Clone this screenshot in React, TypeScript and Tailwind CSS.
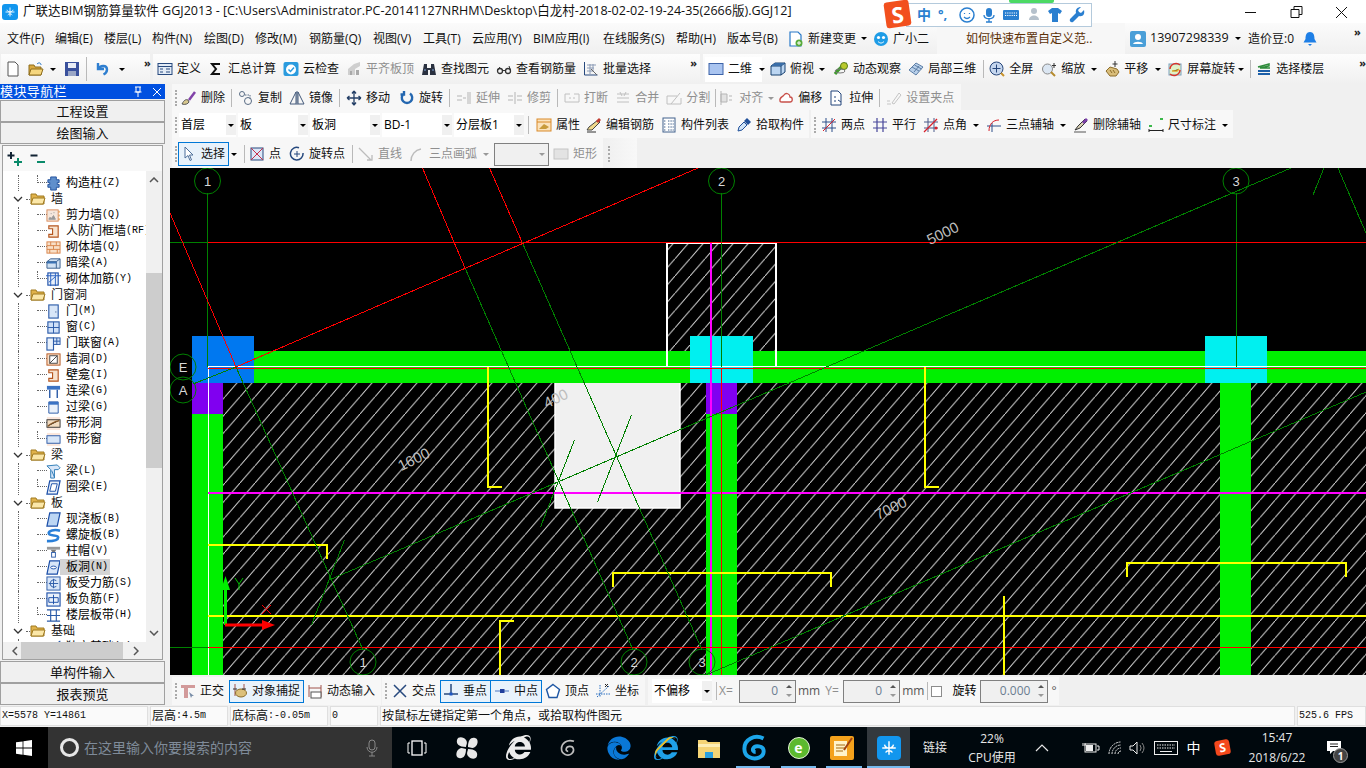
import type { ReactNode } from "react";
import { FaEdge, FaInternetExplorer } from "react-icons/fa";

// 16x16 toolbar + tree icons
const icons: Record<string, ReactNode> = {
  newDoc: <path d="M3 1h7l3 3v11H3z" fill="#fff" stroke="#555" />,
  open: <><path d="M1 4h5l1 2h6v8H1z" fill="#d9a93f" stroke="#8d6c1c" /><path d="M3 8h12l-2 6H1z" fill="#f5d67e" stroke="#8d6c1c" /><path d="M9 3c2-2 4-1 4 1" fill="none" stroke="#1c6fc4" /></>,
  save: <><rect x="1" y="1" width="14" height="14" fill="#39509c" /><rect x="4" y="2" width="8" height="5" fill="#e8ecf6" /><rect x="4" y="10" width="8" height="5" fill="#9aa6c6" /></>,
  undo: <path d="M3 2v6h6M3.5 8C5 4 12 4 12 8.500c0 2-1.500 4-3.500 5" fill="none" stroke="#2f7fd0" strokeWidth="2.400" />,
  define: <><rect x="1" y="2.500" width="14" height="11" fill="#e2ebf6" stroke="#27497e" /><path d="M1 5.500h14M3 8h3M3 11h3M9 8h4M9 11h4" stroke="#27497e" /></>,
  sigma: <path d="M12 3H4l4 5-4 5h8" fill="none" stroke="#111" strokeWidth="2" />,
  cloudCheck: <><rect x="0.500" y="1" width="15" height="14" rx="2" fill="#2b9bde" /><circle cx="8" cy="8.500" r="5" fill="#fff" /><path d="M5.500 8.500l2 2 3.500-4" fill="none" stroke="#2b9bde" strokeWidth="1.500" /></>,
  alignOff: <><path d="M2 8l6-5 6-2v4l-5 3v6H2z" fill="#cfcfcf" /><path d="M4 10h2v4H4zM10 9h3v5h-3z" fill="#a9a9a9" /></>,
  binoc: <><path d="M3 3h3v4h4V3h3l2 11H9V9H7v5H1z" fill="#2a3140" /><path d="M3 9h2M11 9h2" stroke="#7fa4d8" /></>,
  glasses: <><circle cx="4" cy="10" r="2.500" fill="none" stroke="#333" strokeWidth="1.300" /><circle cx="12" cy="10" r="2.500" fill="none" stroke="#333" strokeWidth="1.300" /><path d="M6.500 9.500h3M1.500 9L4 6M14.500 9L13 5" stroke="#333" /></>,
  batch: <><path d="M1.500 1v13h13" fill="none" stroke="#27497e" /><path d="M4 4h9M4 7h7M4 10h5M7 3v10M10 3v8" stroke="#8a9ab5" /><path d="M8 8l6 6" stroke="#666" /></>,
  view2d: <rect x="1" y="2.500" width="14" height="11" fill="#a9c4f0" stroke="#3d63a8" />,
  topView: <><path d="M1 5l4-3h10v9l-4 3H1z" fill="#bcd6f2" stroke="#17406f" /><path d="M1 5h10v9M11 5l4-3" fill="none" stroke="#17406f" /><path d="M1 5l4-3h10l-4 3z" fill="#3a6ea8" /></>,
  orbit: <><path d="M2 13C5 9 10 4 14 3" stroke="#3f9a2c" strokeWidth="3" /><circle cx="11" cy="5" r="3.500" fill="#b9c92c" stroke="#5a7e1a" /><ellipse cx="7" cy="10" rx="5" ry="2" fill="none" stroke="#777" /></>,
  part3d: <><path d="M1 9l7-7 7 4-7 8z" fill="#b9d0ea" stroke="#5c7ea6" /><path d="M4 6l7 4M6.500 4l7 4M6 11l5-6" stroke="#5c7ea6" /></>,
  fullScreen: <><circle cx="7.500" cy="7.500" r="6.500" fill="#c5d6ee" stroke="#26467a" /><path d="M7.500 3.500v8M3.500 7.500h8" stroke="#26467a" /><path d="M12 12l3 3" stroke="#c8922a" strokeWidth="2" /></>,
  zoomIcon: <><circle cx="6.500" cy="8" r="5" fill="#dbe6f2" stroke="#8a8a8a" /><path d="M10 11l4 4" stroke="#b58a2c" strokeWidth="2" /><path d="M13 2v5M11 4.500h4" stroke="#333" /></>,
  hand: <><path d="M2 10l4-4 7 2 2 3-3 4H6z" fill="#d9bd79" stroke="#8c6d2b" /><path d="M6 9l2 3M9 9l2 3" stroke="#8c6d2b" /><path d="M11 0v6M8.500 3h5" stroke="#333" /></>,
  screenRot: <><rect x="2" y="3" width="12" height="11" fill="#dff1c8" stroke="#7aa0c0" /><path d="M3 8a6 6 0 0 1 10-4M13 9a6 6 0 0 1-10 4" fill="none" stroke="#d9342b" strokeWidth="1.500" /><path d="M5 10h5l2-2" stroke="#e3a92c" strokeWidth="1.500" /></>,
  floors: <><path d="M2 6l11-3v2L4 7h10" fill="none" stroke="#2d8b3a" strokeWidth="1.500" /><path d="M2 10h12M2 13h12" stroke="#1c5fa8" strokeWidth="2" /></>,
  broom: <><path d="M1 14c2-4 4-5 6-4l1 2c-1 2-4 3-7 2z" fill="#d8c88d" stroke="#555" /><path d="M8 10l6-8" stroke="#8142a8" strokeWidth="2.500" /></>,
  copy: <><circle cx="4" cy="4" r="2.500" fill="none" stroke="#5a6d85" /><circle cx="10" cy="11" r="3.500" fill="none" stroke="#5a6d85" /><path d="M7 5h5v4" fill="none" stroke="#5a6d85" strokeDasharray="1.500 1" /></>,
  mirror: <path d="M7 2v12H1zM9 2v12h6zM8 1v14" fill="none" stroke="#43597a" />,
  move: <path d="M8 1v14M1 8h14M8 1L6 3.500M8 1l2 2.500M8 15l-2-2.500M8 15l2-2.500M1 8l2.500-2M1 8l2.500 2M15 8l-2.500-2M15 8l-2.500 2" fill="none" stroke="#243f66" strokeWidth="1.300" />,
  rotate: <path d="M11 3.500A5.200 5.200 0 1 1 5 3.500M5 1v3.500H1.500" fill="none" stroke="#2467b0" strokeWidth="2.400" />,
  extend: <path d="M1 6h5M1 10h5M7 8h3M12 2v12M14 2v12" stroke="#b5b5b5" fill="none" />,
  trim: <path d="M1 6h5M10 6h5M1 10h5M10 10h5M8 2v12" stroke="#b5b5b5" fill="none" />,
  breakOff: <path d="M1 4h5M10 4h5M1 12h14M1 4v8M15 4v8M5 8h2M9 8h2" stroke="#c0c0c0" fill="none" />,
  merge: <path d="M2 4h12M2 12h12M5 2l2 4M11 2l-2 4M2 8h12" stroke="#c0c0c0" fill="none" />,
  split: <path d="M1 14h14M1 6h10M1 6v8M15 14V8M5 14l9-11" stroke="#c0c0c0" fill="none" />,
  alignLeft: <path d="M2 1v14M2 4h6v8H2zM10 6h3M10 10h3" stroke="#b5b5b5" fill="#e2e2e2" />,
  offset: <path d="M2 11c-1-4 3-4 4-6 2-3 6-1 6 2 3 0 3 5 0 5H4c-1 0-2 0-2-1z" fill="#fff" stroke="#c8504a" strokeWidth="1.300" />,
  stretch: <><path d="M2 1h7l3 3v11H2z" fill="#fff" stroke="#23457a" /><path d="M6 6v2M6 10v2M9 10l3 2" stroke="#23457a" /></>,
  gripOff: <path d="M1 14h4M6 13l7-10 2 2-7 9zM1 11h3" stroke="#c5c5c5" fill="none" />,
  attr: <><rect x="1" y="2" width="14" height="12" fill="#fbe3bd" stroke="#d98a2b" /><path d="M1 5h14" stroke="#d98a2b" /><path d="M3 12l5-5 5 3-3 2z" fill="#c89b3c" /></>,
  editBar: <><path d="M1 13l2-3 9-7 2 2-8 8z" fill="#f0d98c" stroke="#444" /><path d="M10 4l3-3 2 2-3 3z" fill="#c23b30" /><path d="M1 15h9" stroke="#333" /></>,
  list: <><rect x="2" y="1" width="12" height="14" fill="#fff" stroke="#41618c" /><path d="M3 4h2M3 7h2M3 10h2M3 13h2M7 4h6M7 7h6M7 10h6M7 13h6" stroke="#41618c" strokeDasharray="1 .6" /></>,
  pick: <><path d="M2 14l1-4 5-5 3 3-5 5z" fill="#cfe3f7" stroke="#20509a" /><path d="M8 4l3-3 4 4-3 3z" fill="#20509a" /></>,
  twoPoint: <><path d="M5 1v14M11 1v14M1 5h14M1 11h14" stroke="#2d4f8a" fill="none" /><path d="M2 14L14 2" stroke="#d8202b" /></>,
  parallel: <path d="M5 1v14M11 1v14M1 5h14M1 11h14" stroke="#47469a" fill="none" strokeWidth="1.200" />,
  pointAngle: <><path d="M5 1v14M11 1v14M1 5h14M1 11h14" stroke="#4b5a8a" fill="none" /><path d="M1 15L14 2" stroke="#d8202b" strokeWidth="1.300" /><circle cx="13" cy="11" r="1.500" fill="#d8202b" /></>,
  threePoint: <><path d="M6 15V6M1 9h14" stroke="#2d4f8a" fill="none" /><path d="M3 14c0-7 4-11 10-11" stroke="#d8202b" fill="none" /></>,
  delAxis: <><path d="M1 15h12" stroke="#555" /><path d="M2 13l3-4 7-7 2 2-7 7z" fill="#d9d0b5" stroke="#333" /><path d="M9 5l4-4 2 2-4 4z" fill="#7a3fa8" /></>,
  dim: <><path d="M1 12v3M15 12v3M1 13.500h14" stroke="#222" /><rect x="1" y="8" width="3" height="2" fill="#3bb84a" /><rect x="12" y="1" width="3" height="2" fill="#3bb84a" /></>,
  cursor: <path d="M4 1v11l3-2.500 2 5 1.500-.6-2-4.900H12z" fill="#fff" stroke="#4d6f9a" />,
  point: <><rect x="2" y="2" width="12" height="12" fill="#dce7f7" stroke="#27497e" /><path d="M2 2l12 12M14 2L2 14" stroke="#c62f4a" /></>,
  rotPoint: <><path d="M10 1.800A6.300 6.300 0 1 0 14 7" fill="none" stroke="#27497e" strokeWidth="1.500" /><path d="M8 5v6M5 8h6" stroke="#27497e" /></>,
  lineOff: <path d="M1 2l12 12M9 14h5V9" stroke="#bcbcbc" fill="none" strokeWidth="1.300" />,
  arcOff: <path d="M2 15c0-6 4-11 10-12" stroke="#bcbcbc" fill="none" strokeWidth="1.500" />,
  rectOff: <rect x="1" y="3" width="14" height="10" fill="#e3e3e3" stroke="#c5c5c5" />,
  ortho: <><path d="M1 2h14v3H8v10H4V5H1z" fill="#d29a9a" /><path d="M9 9l5 4-2 0-1 2z" fill="#7a8ea8" /></>,
  snap: <><path d="M3 1v12M12 1v12" stroke="#a0524a" /><ellipse cx="9" cy="10" rx="5.500" ry="4" fill="#dcc07a" stroke="#8c6d2b" /><path d="M1 6h4M10 6h4" stroke="#333" /></>,
  dynInput: <><path d="M2 2v12M14 2v12M2 5h12" stroke="#a0524a" /><rect x="4" y="9" width="10" height="6" fill="#fff" stroke="#555" /></>,
  cross: <path d="M2 2l12 12M14 2L2 14" stroke="#27497e" strokeWidth="1.500" />,
  perp: <><path d="M1 11h14M8 1v10" stroke="#27497e" strokeWidth="1.500" /><rect x="6.500" y="9.500" width="3" height="3" fill="#1f57c4" /></>,
  mid: <><path d="M1 8h14" stroke="#7f9fd4" strokeWidth="1.500" /><rect x="6" y="6" width="4.500" height="4" fill="#1f3f9c" /></>,
  vertex: <path d="M8 1.500l6.500 5-2.500 8H4L1.500 6.500z" fill="#fff" stroke="#1f57a4" strokeWidth="1.400" />,
  coord: <><path d="M5 2v12M1 11h14M2 14L14 3" stroke="#2a6fc0" strokeDasharray="1.500 1" /><path d="M10 1l3 3M13 1l-3 3" stroke="#222" /></>,
  change: <><path d="M2 1h8l3 3v11H2z" fill="#fff" stroke="#2979c8" strokeWidth="1.200" /><circle cx="11" cy="12" r="3.500" fill="#58ab3a" /><path d="M11 10v4M9 12h4" stroke="#fff" /></>,
  xiaoer: <><circle cx="8" cy="8" r="7" fill="#1e9ce6" /><circle cx="5.500" cy="6.500" r="1.600" fill="#fff" /><circle cx="10.500" cy="6.500" r="1.600" fill="#fff" /><path d="M5 10.500c2 2 4 2 6 0" stroke="#fff" fill="none" /></>,
  avatar: <><rect width="16" height="16" rx="2" fill="#4a9fd8" /><circle cx="8" cy="6" r="3" fill="#fff" /><path d="M3 13c1-3 9-3 10 0z" fill="#fff" /></>,
  bell: <><path d="M8 1c3.500 0 4.500 3 4.500 7l2 3.500h-13l2-3.500c0-4 1-7 4.500-7z" fill="#1e7fe6" /><path d="M6 13h4l-2 2z" fill="#1e7fe6" /></>,
  // tree icons
  tCol: <path d="M5 1h6v3h3v3h-2v2h2v3h-3v3H5v-3H2V9h2V7H2V4h3z" fill="#5f8fcc" stroke="#1f4f9c" />,
  tShear: <><rect x="1" y="2" width="12" height="12" fill="#f5e7dc" stroke="#d88a5a" /><path d="M3 12l1-2 2 1 2-3 2 4zM5 6h1M8 5h1" fill="#999" stroke="#999" /><path d="M14 3v2M14 7v2M14 11v2" stroke="#e08a2a" /></>,
  tFrame: <path d="M3 2h10v12H3v-3h4V5H3z" fill="#f7e3cf" stroke="#b5561f" strokeWidth="1.200" />,
  tBrick: <><rect x="1" y="2" width="14" height="12" fill="#f8dfc7" stroke="#d8844a" /><path d="M1 6h14M1 10h14M5 2v4M11 2v4M8 6v4M4 10v4M12 10v4" stroke="#d8844a" /></>,
  tDark: <><path d="M1 6l4-3h10v10H1z" fill="#cfe0f2" stroke="#365d8c" /><path d="M1 6h10v7M11 6l4-3" fill="none" stroke="#365d8c" /><rect x="1" y="6" width="10" height="2" fill="#3a72b4" /></>,
  tRebar: <><rect x="2" y="1" width="11" height="13" fill="#eaf1fa" stroke="#1c4fa8" strokeWidth="1.200" /><path d="M0 4h16M5 1v14M10 1v14M3 11l7-6" stroke="#2860c0" /></>,
  tDoor: <><rect x="3" y="1" width="10" height="14" fill="#d8e6f8" stroke="#2a5aa8" strokeWidth="1.200" /><rect x="10" y="8" width="1" height="1" fill="#1a3a78" /></>,
  tWin: <><rect x="2" y="2" width="12" height="12" fill="#cfe0f8" stroke="#2a5aa8" strokeWidth="1.200" /><path d="M8 2v12M2 8h12" stroke="#2a5aa8" /></>,
  tDoorWin: <><rect x="1" y="2" width="7" height="13" fill="#e9f1fb" stroke="#2a5aa8" strokeWidth="1.200" /><rect x="8" y="2" width="7" height="7" fill="#cfe0f8" stroke="#2a5aa8" /><path d="M11.500 2v7M8 5.500h7" stroke="#2a5aa8" /></>,
  tHole: <><rect x="1" y="2" width="14" height="12" fill="#f8dfc7" stroke="#b5561f" /><rect x="4" y="4" width="8" height="8" fill="#fff" stroke="#444" /><path d="M4 12l8-8" stroke="#444" /></>,
  tLink: <><rect x="1" y="2" width="14" height="4" fill="#3b73c4" /><path d="M4 6v9M12 6v9" stroke="#2a5aa8" strokeWidth="1.500" /></>,
  tLintel: <><path d="M3 2h10v12H3z" fill="#eaf1fa" stroke="#2a5aa8" /><path d="M3 2h10v3H3z" fill="#3b73c4" /></>,
  tStrip: <><rect x="1" y="1" width="14" height="14" fill="#fbe7dc" /><rect x="1" y="4" width="14" height="8" fill="#f3dcc0" stroke="#333" /><path d="M2 11c4-4 8-5 12-6" stroke="#8a5a2a" strokeWidth="1.500" /></>,
  tStripW: <><rect x="1" y="1" width="14" height="14" fill="#fbe7dc" /><rect x="1" y="4" width="14" height="8" fill="#d8e6f8" stroke="#2a5aa8" /></>,
  tBeam: <><path d="M1 2l11-1 3 3-2 2H9v9H5V6z" fill="#d8e6f8" stroke="#2a7ab4" /><path d="M6 7l3 7" stroke="#2a7ab4" /></>,
  tRing: <><path d="M4 1h11l-3 14H1z" fill="#eaf1fa" stroke="#1c4fa8" strokeWidth="1.300" /><path d="M6 4h6l-2 8H4z" fill="#fff" stroke="#1c4fa8" /></>,
  tSlab: <path d="M4 1h11l-3 14H1z" fill="#bcd6f4" stroke="#1c4fa8" strokeWidth="1.300" />,
  tSpiral: <path d="M15 3C9 1 2 3 3 6s10 1 10 4-5 4-12 4" fill="none" stroke="#2a7fd8" strokeWidth="2.800" />,
  tCap: <><rect x="1" y="3" width="14" height="3" fill="#9a9a9a" /><path d="M5 6h6l-2 3H7z" fill="#777" /><rect x="6" y="9" width="4" height="5" fill="#fff" stroke="#2a5aa8" /></>,
  tOpen: <><path d="M4 1h11l-3 14H1z" fill="#d8e6f8" stroke="#1c4fa8" strokeWidth="1.300" /><ellipse cx="8" cy="8" rx="3" ry="1.500" fill="#fff" stroke="#1c4fa8" /></>,
  tForce: <><rect x="1" y="1" width="14" height="14" fill="#d8e6f8" stroke="#2a5aa8" /><path d="M8 3v10M3 8h10M11 5a4 4 0 1 0 0 6" fill="none" stroke="#2a5aa8" /></>,
  tNeg: <><rect x="1" y="1" width="14" height="14" fill="#eaf1fa" stroke="#1c4fa8" strokeWidth="1.200" /><path d="M8 3v10M3 6h10v5H3z" fill="none" stroke="#1c4fa8" /></>,
  tBand: <path d="M1 2h14M1 14h14M5 2v12M11 2v12M1 8h14" fill="none" stroke="#2a5aa8" strokeWidth="1.200" />,
  tFound: <path d="M3 15l3-5 5-6 4-3-2 6-4 5z" fill="#bcd6f4" stroke="#1c4fa8" />,
};

function Ico({ n, className = "h-4 w-4" }: { n: string; className?: string }) {
  return <svg viewBox="0 0 16 16" className={`${className} shrink-0`}>{icons[n]}</svg>;
}

function Caret({ off, className = "" }: { off?: boolean; className?: string }) {
  return <span className={`h-0 w-0 shrink-0 border-x-[3px] border-t-[3px] border-x-transparent ${off ? "border-t-[#999]" : "border-t-black"} ${className}`} />;
}

function Sep({ className = "" }: { className?: string }) {
  return <span className={`h-[18px] w-px shrink-0 bg-[#b9b9b9] ${className}`} />;
}

function Grip({ className = "" }: { className?: string }) {
  return <span className={`h-[16px] w-0 shrink-0 border-l-2 border-dotted border-[#aaaaaa] ${className}`} />;
}

function More({ className = "" }: { className?: string }) {
  return <span className={`self-start text-[11px] leading-[18px] font-bold text-[#222] ${className}`}>»</span>;
}

function Tool({ n, label, off, className = "" }: { n: string; label: string; off?: boolean; className?: string }) {
  return (
    <div className={`flex shrink-0 items-center gap-1 ${className}`}>
      <Ico n={n} />
      <span className={off ? "text-[#8f8f8f]" : "text-[#111]"}>{label}</span>
    </div>
  );
}

function Combo({ label, w, className = "" }: { label: string; w: string; className?: string }) {
  return (
    <div className={`flex h-6 shrink-0 items-center justify-between bg-white pl-[2px] ${w} ${className}`}>
      <span>{label}</span>
      <span className="flex h-5 w-[10px] items-center justify-center bg-[#f0f0f0]"><Caret /></span>
    </div>
  );
}

function Selected({ children, className = "" }: { children: ReactNode; className?: string }) {
  return <div className={`flex shrink-0 items-center border border-[#0078d7] bg-[#e8f2fb] ${className}`}>{children}</div>;
}

function NumBox({ value, w }: { value: string; w: string }) {
  return (
    <div className={`flex h-[23px] shrink-0 items-center justify-end border border-[#808080] bg-[#f0f0f0] pr-[2px] text-[#6b7d90] ${w}`}>
      <span className="mr-[6px]">{value}</span>
      <span className="flex h-full w-[9px] flex-col items-center justify-center gap-[6px]">
        <span className="h-0 w-0 border-x-[3px] border-b-[3px] border-x-transparent border-b-[#555]" />
        <Caret off />
      </span>
    </div>
  );
}

const menus = [
  { t: "文件(F)", w: "w-[48px]" },
  { t: "编辑(E)", w: "w-[49px]" },
  { t: "楼层(L)", w: "w-[48px]" },
  { t: "构件(N)", w: "w-[52px]" },
  { t: "绘图(D)", w: "w-[51px]" },
  { t: "修改(M)", w: "w-[54px]" },
  { t: "钢筋量(Q)", w: "w-[64px]" },
  { t: "视图(V)", w: "w-[50px]" },
  { t: "工具(T)", w: "w-[49px]" },
  { t: "云应用(Y)", w: "w-[61px]" },
  { t: "BIM应用(I)", w: "w-[70px]" },
  { t: "在线服务(S)", w: "w-[73px]" },
  { t: "帮助(H)", w: "w-[51px]" },
  { t: "版本号(B)", w: "w-[61px]" },
];

function TitleBar() {
  return (
    <div className="flex h-[23px] shrink-0 items-center bg-white pl-[2px] text-[12.560px] text-[#111]">
      <span className="flex h-4 w-4 items-center justify-center rounded-[3px] bg-[#1296ee]">
        <svg viewBox="0 0 16 16" className="h-3 w-3"><path d="M8 2v12M2 8h12M4 5c1 4 7 4 8 0M5 12c1-2 5-2 6 0" fill="none" stroke="#fff" strokeWidth="1.200" /></svg>
      </span>
      <span className="ml-[5px] whitespace-nowrap">{"广联达BIM钢筋算量软件 GGJ2013 - [C:\\Users\\Administrator.PC-20141127NRHM\\Desktop\\白龙村-2018-02-02-19-24-35(2666版).GGJ12]"}</span>
      <svg viewBox="0 0 116 16" className="ml-auto h-4 w-[116px] shrink-0">
        <path d="M0 8.500h11M46 5.500h8v8h-8zM49 5.500V2.500h8v8h-3M91 3l11 11M102 3L91 14" fill="none" stroke="#111" />
      </svg>
      <span className="w-[5px] shrink-0" />
    </div>
  );
}

function MenuBar() {
  return (
    <div className="flex h-[31px] shrink-0 items-center">
      <div className="flex h-full w-[937px] items-center bg-linear-to-b from-[#fbfbfb] to-[#f0f0f0] pl-[7px] text-[#111]">
        {menus.map((m) => <span key={m.t} className={`shrink-0 whitespace-nowrap ${m.w}`}>{m.t}</span>)}
        <Tool n="change" label="新建变更" />
        <Caret className="ml-[5px]" />
        <Tool n="xiaoer" label="广小二" className="ml-[6px]" />
      </div>
      <div className="flex h-full w-[188px] items-center bg-[#f7f7f7] pl-[29px] text-[#5c3208]">如何快速布置自定义范..</div>
      <div className="flex h-full flex-1 items-center bg-linear-to-b from-[#fbfbfb] to-[#f0f0f0] pl-[5px] text-[#111]">
        <Ico n="avatar" />
        <span className="ml-1 w-[82px] text-[12.500px]">13907298339</span>
        <Caret className="ml-[3px]" />
        <span className="ml-[7px]">造价豆:0</span>
        <Ico n="bell" className="ml-[8px] h-4 w-4" />
        <More className="ml-[36px]" />
      </div>
    </div>
  );
}

function MainBar() {
  return (
    <div className="flex h-[30px] shrink-0 items-stretch gap-[3px] pl-px">
      <div className="flex w-[149px] items-center bg-linear-to-b from-[#fdfdfd] to-[#f0f0f0] pl-[4px]">
        <Ico n="newDoc" />
        <Ico n="open" className="ml-[7px] h-4 w-4" />
        <Caret className="ml-[6px]" />
        <Ico n="save" className="ml-[8px] h-4 w-4" />
        <Sep className="ml-[6px] h-[24px]" />
        <Ico n="undo" className="ml-[8px] h-4 w-4" />
        <Caret className="ml-[8px]" />
        <More className="ml-[19px]" />
      </div>
      <div className="flex w-[547px] items-center gap-[7px] bg-linear-to-b from-[#fdfdfd] to-[#f0f0f0] pl-[4px]">
        <Tool n="define" label="定义" />
        <Tool n="sigma" label="汇总计算" />
        <Tool n="cloudCheck" label="云检查" />
        <Tool n="alignOff" label="平齐板顶" off />
        <Tool n="binoc" label="查找图元" />
        <Tool n="glasses" label="查看钢筋量" />
        <Tool n="batch" label="批量选择" />
        <More className="ml-auto mr-[3px]" />
      </div>
      <div className="flex flex-1 items-center bg-linear-to-b from-[#fdfdfd] to-[#f0f0f0] pl-[2px]">
        <div className="flex h-[25px] w-[60px] items-center bg-white pl-[3px]">
          <Tool n="view2d" label="二维" />
          <Caret className="ml-[7px]" />
        </div>
        <Tool n="topView" label="俯视" className="ml-[8px]" />
        <Caret className="ml-[5px]" />
        <Tool n="orbit" label="动态观察" className="ml-[8px]" />
        <Tool n="part3d" label="局部三维" className="ml-[7px]" />
        <Sep className="ml-[7px] h-[16px]" />
        <Tool n="fullScreen" label="全屏" className="ml-[5px]" />
        <Tool n="zoomIcon" label="缩放" className="ml-[8px]" />
        <Caret className="ml-[6px]" />
        <Tool n="hand" label="平移" className="ml-[7px]" />
        <Caret className="ml-[7px]" />
        <Tool n="screenRot" label="屏幕旋转" className="ml-[6px]" />
        <Caret className="ml-[3px]" />
        <Sep className="ml-[6px] h-[16px]" />
        <Tool n="floors" label="选择楼层" className="ml-[5px]" />
        <More className="ml-[35px]" />
      </div>
    </div>
  );
}

function EditBar() {
  return (
    <div className="flex h-[26px] shrink-0 items-stretch pl-[2px]">
      <div className="flex w-[789px] items-center gap-[7px] bg-[#f7f7f7] pl-[3px] pt-[2px]">
        <Grip />
        <Tool n="broom" label="删除" className="-ml-[3px]" />
        <Sep className="-mx-px" />
        <Tool n="copy" label="复制" />
        <Tool n="mirror" label="镜像" />
        <Sep className="-mx-px" />
        <Tool n="move" label="移动" />
        <Tool n="rotate" label="旋转" className="ml-[2px]" />
        <Sep className="-mx-px" />
        <Tool n="extend" label="延伸" off />
        <Tool n="trim" label="修剪" off />
        <Sep className="-mx-px" />
        <Tool n="breakOff" label="打断" off />
        <Tool n="merge" label="合并" off />
        <Tool n="split" label="分割" off />
        <Sep className="-mx-[2px]" />
        <Tool n="alignLeft" label="对齐" off className="-ml-[2px]" />
        <Caret off className="-ml-[2px]" />
        <Tool n="offset" label="偏移" className="-ml-[3px]" />
        <Tool n="stretch" label="拉伸" />
        <Sep className="-mx-px" />
        <Tool n="gripOff" label="设置夹点" off />
      </div>
    </div>
  );
}

function PropBar() {
  return (
    <div className="flex h-[28px] shrink-0 items-stretch pl-[2px]">
      <div className="flex w-[637px] items-center bg-[#f8f8f8] pl-[3px] pt-[2px]">
        <Grip />
        <Combo label="首层" w="w-[57px]" className="ml-[2px]" />
        <div className="ml-[2px] flex gap-[2px]">
          <Combo label="板" w="w-[70px]" />
          <Combo label="板洞" w="w-[70px]" />
          <Combo label="BD-1" w="w-[70px]" />
          <Combo label="分层板1" w="w-[70px]" />
        </div>
        <Sep className="ml-[4px]" />
        <Tool n="attr" label="属性" className="ml-[7px]" />
        <Tool n="editBar" label="编辑钢筋" className="ml-[6px]" />
        <Tool n="list" label="构件列表" className="ml-[7px]" />
        <Tool n="pick" label="拾取构件" className="ml-[7px]" />
      </div>
      <div className="ml-[2px] flex w-[422px] items-center bg-[#f8f8f8] pl-[3px] pt-[2px]">
        <Grip />
        <Tool n="twoPoint" label="两点" className="ml-[5px]" />
        <Tool n="parallel" label="平行" className="ml-[7px]" />
        <Tool n="pointAngle" label="点角" className="ml-[7px]" />
        <Caret className="ml-[6px]" />
        <Tool n="threePoint" label="三点辅轴" className="ml-[7px]" />
        <Caret className="ml-[6px]" />
        <Tool n="delAxis" label="删除辅轴" className="ml-[7px]" />
        <Tool n="dim" label="尺寸标注" className="ml-[7px]" />
        <Caret className="ml-[6px]" />
      </div>
    </div>
  );
}

function DrawBar() {
  return (
    <div className="flex h-[30px] shrink-0 items-stretch gap-[2px] pl-[2px]">
      <div className="flex w-[431px] items-center bg-[#f7f7f7] pl-[3px] pt-[2px]">
        <Grip />
        <Selected className="ml-px h-[24px] w-[51px] pl-[2px]"><Tool n="cursor" label="选择" /></Selected>
        <Caret className="ml-[2px]" />
        <Sep className="ml-[7px]" />
        <Tool n="point" label="点" className="ml-[4px]" />
        <Tool n="rotPoint" label="旋转点" className="ml-[8px]" />
        <Sep className="ml-[7px]" />
        <Tool n="lineOff" label="直线" off className="ml-[5px]" />
        <Tool n="arcOff" label="三点画弧" off className="ml-[7px]" />
        <Caret off className="ml-[6px]" />
        <div className="ml-[5px] flex h-[23px] w-[55px] shrink-0 items-center justify-end border border-[#808080] bg-[#f0f0f0] pr-[3px]"><Caret off /></div>
        <Tool n="rectOff" label="矩形" off className="ml-[4px]" />
      </div>
      <div className="flex w-[32px] items-center bg-linear-to-r from-[#f0f0f0] to-[#f8f8f8] pl-[3px] pt-[2px]"><Grip /></div>
    </div>
  );
}

function Bubble({ x, y, t }: { x: number; y: number; t: string }) {
  return (
    <g>
      <circle cx={x} cy={y} r={13} fill="none" stroke="#008000" />
      <text x={x} y={y + 5} textAnchor="middle" fontSize="13" fill="#d8d8d8" fontFamily="Liberation Sans, sans-serif">{t}</text>
    </g>
  );
}

function Dim({ x, y, t, a = -26 }: { x: number; y: number; t: string; a?: number }) {
  return <text x={x} y={y} textAnchor="middle" fontSize="15" fill="#bdbdbd" fontFamily="Liberation Sans, sans-serif" transform={`rotate(${a} ${x} ${y})`}>{t}</text>;
}

function Canvas() {
  const G = "#008000";
  const R = "#ff0000";
  const Y = "#ffff00";
  const M = "#ff00ff";
  return (
    <svg viewBox="170 168 1196 507" className="h-[507px] w-full shrink-0 bg-black">
      <defs>
        <pattern id="hatch" width="15" height="17.250" patternUnits="userSpaceOnUse">
          <path d="M-1.500 18.975L16.500-1.725" stroke="#d4d4d4" strokeWidth="1" />
        </pattern>
      </defs>
      <rect x="222" y="383" width="1144" height="292" fill="url(#hatch)" />
      <rect x="667" y="243" width="109" height="108" fill="url(#hatch)" />
      <rect x="555" y="382" width="125" height="126" fill="#f0f0f0" stroke="#fff" strokeWidth="1.500" />
      <g shapeRendering="crispEdges">
        <rect x="254" y="351" width="1112" height="32" fill="#00f000" />
        <rect x="192" y="383" width="31" height="292" fill="#00f000" />
        <rect x="706" y="383" width="31" height="292" fill="#00f000" />
        <rect x="1220" y="383" width="31" height="292" fill="#00f000" />
        <rect x="192" y="336" width="62" height="47" fill="#0078f0" />
        <rect x="690" y="336" width="63" height="47" fill="#00f0f0" />
        <rect x="1205" y="336" width="62" height="47" fill="#00f0f0" />
        <rect x="192" y="383" width="31" height="31" fill="#8000f0" />
        <rect x="706" y="383" width="31" height="31" fill="#8000f0" />
        <path d="M667 366V242.500H776V366" fill="none" stroke="#fff" strokeWidth="2" />
        <path d="M208 366h1158" stroke="#fff" />
        <path d="M208.500 367V675" stroke="#fff" strokeWidth="1.500" />
        <path d="M208 492.500h1158M711 242V675" stroke={M} strokeWidth="2" fill="none" />
        <path d="M207.500 193V367M721.500 193V367M1236 193V367" stroke={G} />
        <path d="M208 242.500h1158M208 368h1158M721.500 368V675" stroke={R} fill="none" />
        <path d="M170 242.500h38M170 647.500h38" stroke={G} />
        <path d="M208 647.500h1158" stroke={R} />
        <path d="M208 616h1158M488 367V487h14M925 367V487h14M208 545H327V559M613 587V573H831V587M1127 577V563H1346V577M500 675V621H514M1003.500 596V675" fill="none" stroke={Y} strokeWidth="2" />
        <path d="M465 268L633 650M522 242L702 650M236 367L363 650M236 367L193 384M1291 168L329 580M1366 392L706 675M631.500 415L597.500 502M574.500 440L540.500 527M344.500 540L311.500 625M1324 168L1313 195M1338 168L1366 233" fill="none" stroke={G} />
        <path d="M422.500 168L465 268M489.500 168L522 242M170 213L236 367M698 168L236 367" fill="none" stroke={R} />
      </g>
      <Bubble x={207.500} y={181} t="1" />
      <Bubble x={721.500} y={181} t="2" />
      <Bubble x={1236} y={181} t="3" />
      <Bubble x={183} y={367} t="E" />
      <Bubble x={183} y={390} t="A" />
      <Bubble x={363} y={662} t="1" />
      <Bubble x={634} y={662} t="2" />
      <Bubble x={702} y={662} t="3" />
      <Dim x={945} y={238} t="5000" />
      <Dim x={416} y={464} t="1600" />
      <Dim x={558} y={403} t="400" />
      <Dim x={893} y={513} t="7000" />
      <path d="M225.500 625V590" stroke="#00f000" strokeWidth="3" />
      <path d="M221 590L225.500 576L230 590z" fill="#00f000" />
      <path d="M225 625H264" stroke={R} strokeWidth="3" />
      <path d="M262 620L275 625L262 630z" fill={R} />
      <path d="M235 578L239 584L243 578M239 584V590" fill="none" stroke="#00c000" />
      <path d="M262 605L271 614M271 605L262 614" stroke={R} />
    </svg>
  );
}

function SnapBar() {
  return (
    <div className="flex h-[30px] shrink-0 items-start gap-px pl-[2px] pt-[2px]">
      <div className="flex h-[28px] w-[209px] items-center bg-[#f7f7f7] pl-[3px]">
        <Grip />
        <Tool n="ortho" label="正交" className="ml-[3px]" />
        <Selected className="ml-[5px] h-[23px] w-[75px] pl-[2px]"><Tool n="snap" label="对象捕捉" /></Selected>
        <Tool n="dynInput" label="动态输入" className="ml-[3px]" />
      </div>
      <div className="flex h-[28px] w-[263px] items-center bg-[#f7f7f7] pl-[3px]">
        <Grip />
        <Tool n="cross" label="交点" className="ml-[5px]" />
        <Selected className="ml-[4px] h-[23px] w-[51px] pl-[2px]"><Tool n="perp" label="垂点" /></Selected>
        <Selected className="-ml-px h-[23px] w-[52px] pl-[3px]"><Tool n="mid" label="中点" /></Selected>
        <Tool n="vertex" label="顶点" className="ml-[3px]" />
        <Tool n="coord" label="坐标" className="ml-[6px]" />
      </div>
      <div className="ml-[2px] flex h-[28px] w-[411px] items-center bg-[#f7f7f7] pl-[4px]">
        <Combo label="不偏移" w="w-[60px]" />
        <Sep className="ml-[4px]" />
        <span className="ml-[2px] w-[20px] text-[#8f8f8f]">X=</span>
        <NumBox value="0" w="w-[57px]" />
        <span className="ml-[2px] text-[#555]">mm</span>
        <span className="ml-[5px] w-[18px] text-[#8f8f8f]">Y=</span>
        <NumBox value="0" w="w-[57px]" />
        <span className="ml-[2px] text-[#555]">mm</span>
        <Sep className="ml-[3px]" />
        <span className="ml-[3px] h-[11px] w-[11px] shrink-0 border border-[#8c8c8c] bg-white" />
        <span className="ml-[10px]">旋转</span>
        <span className="ml-[4px] flex"><NumBox value="0.000" w="w-[68px]" /></span>
        <span className="ml-[3px] text-[#555]">°</span>
      </div>
    </div>
  );
}

type Row = { label: string; sfx?: string; ic?: string; folder?: boolean; last?: boolean; sel?: boolean };

const rows: Row[] = [
  { label: "构造柱", sfx: "(Z)", ic: "tCol", last: true },
  { label: "墙", folder: true },
  { label: "剪力墙", sfx: "(Q)", ic: "tShear" },
  { label: "人防门框墙", sfx: "(RF)", ic: "tFrame" },
  { label: "砌体墙", sfx: "(Q)", ic: "tBrick" },
  { label: "暗梁", sfx: "(A)", ic: "tDark" },
  { label: "砌体加筋", sfx: "(Y)", ic: "tRebar", last: true },
  { label: "门窗洞", folder: true },
  { label: "门", sfx: "(M)", ic: "tDoor" },
  { label: "窗", sfx: "(C)", ic: "tWin" },
  { label: "门联窗", sfx: "(A)", ic: "tDoorWin" },
  { label: "墙洞", sfx: "(D)", ic: "tHole" },
  { label: "壁龛", sfx: "(I)", ic: "tFrame" },
  { label: "连梁", sfx: "(G)", ic: "tLink" },
  { label: "过梁", sfx: "(G)", ic: "tLintel" },
  { label: "带形洞", ic: "tStrip" },
  { label: "带形窗", ic: "tStripW", last: true },
  { label: "梁", folder: true },
  { label: "梁", sfx: "(L)", ic: "tBeam" },
  { label: "圈梁", sfx: "(E)", ic: "tRing", last: true },
  { label: "板", folder: true },
  { label: "现浇板", sfx: "(B)", ic: "tSlab" },
  { label: "螺旋板", sfx: "(B)", ic: "tSpiral" },
  { label: "柱帽", sfx: "(V)", ic: "tCap" },
  { label: "板洞", sfx: "(N)", ic: "tOpen", sel: true },
  { label: "板受力筋", sfx: "(S)", ic: "tForce" },
  { label: "板负筋", sfx: "(F)", ic: "tNeg" },
  { label: "楼层板带", sfx: "(H)", ic: "tBand", last: true },
  { label: "基础", folder: true },
  { label: "独立基础", sfx: "(D)", ic: "tFound" },
];

function TreeRow({ r }: { r: Row }) {
  if (r.folder) {
    return (
      <div className="flex h-4 items-center">
        <svg viewBox="0 0 10 6" className="ml-[10px] h-[6px] w-[10px] shrink-0"><path d="M1 1l4 4 4-4" fill="none" stroke="#333" strokeWidth="1.300" /></svg>
        <span className="ml-[3px] w-[4px] border-t border-dotted border-[#666]" />
        <svg viewBox="0 0 16 12" className="h-3 w-4 shrink-0"><path d="M1 1h5l1 2h7v8H1z" fill="#e0b24a" stroke="#a07a20" /><path d="M3 5h12l-2 6H1z" fill="#fbe7a8" stroke="#a07a20" /></svg>
        <span className="ml-[5px]">{r.label}</span>
      </div>
    );
  }
  return (
    <div className="flex h-4 items-center">
      <span className="ml-[15px] h-4 w-[19px] shrink-0 border-l border-dotted border-[#666]" />
      <span className={`w-[10px] shrink-0 self-start border-b border-dotted border-[#666] ${r.last ? "h-2 border-l" : "h-2"}`} />
      <Ico n={r.ic ?? "tCol"} className="-ml-px h-[15px] w-[15px]" />
      <span className={`ml-[-1px] flex h-4 shrink-0 items-center whitespace-nowrap pl-[6px] pr-[2px] text-black ${r.sel ? "bg-[#d4d4d4]" : ""}`}>
        {r.label}
        {r.sfx ? <span className="font-['Liberation_Mono',monospace] text-[10px]">{r.sfx}</span> : null}
      </span>
    </div>
  );
}

function SideButton({ label, h }: { label: string; h: string }) {
  return <div className={`flex shrink-0 items-center justify-center border border-[#a0a0a0] bg-[#f0f0f0] text-[13px] text-[#111] ${h}`}>{label}</div>;
}

function Sidebar() {
  return (
    <div className="flex w-[165px] shrink-0 flex-col">
      <div className="flex h-[15px] shrink-0 items-center bg-[#0050e0] text-[13px] leading-none tracking-[0.400px] text-white">
        <span>模块导航栏</span>
        <svg viewBox="0 0 31 12" className="ml-auto h-3 w-[31px] shrink-0"><path d="M1 1h6M2 1v5h4V1M0.500 6h7M4 6v5" stroke="#fff" fill="none" /><path d="M19 2l8 8M27 2l-8 8" stroke="#fff" /></svg>
      </div>
      <div className="flex flex-col pt-px">
        <SideButton label="工程设置" h="h-[22px]" />
        <SideButton label="绘图输入" h="h-[22px]" />
      </div>
      <div className="ml-[2px] mr-[2px] mt-px flex h-[515px] shrink-0 flex-col border border-[#a0a0a0] bg-white">
        <div className="flex h-[25px] shrink-0 items-center gap-[7px] bg-[#f8f8f8] pl-[4px]">
          <svg viewBox="0 0 16 16" className="h-4 w-4 shrink-0"><path d="M4 1v7M0.500 4.500h7" stroke="#123" strokeWidth="2" /><path d="M11 7v8M7 11h8" stroke="#0a8a6a" strokeWidth="2" /></svg>
          <svg viewBox="0 0 16 16" className="h-4 w-4 shrink-0"><path d="M0.500 4.500h7" stroke="#123" strokeWidth="2" /><path d="M7 11h8" stroke="#0a8a6a" strokeWidth="2" /></svg>
        </div>
        <div className="flex min-h-0 flex-1">
          <div className="w-[143px] shrink-0 overflow-hidden pt-[4px] text-[#111]">
            {rows.map((r, i) => <TreeRow key={i} r={r} />)}
          </div>
          <div className="flex flex-1 flex-col items-center bg-[#f0f0f0] pt-[6px]">
            <svg viewBox="0 0 10 6" className="h-[6px] w-[10px]"><path d="M1 5l4-4 4 4" fill="none" stroke="#555" strokeWidth="1.500" /></svg>
            <span className="mt-[90px] h-[195px] w-full shrink-0 bg-[#cdcdcd]" />
            <svg viewBox="0 0 10 6" className="mt-[162px] h-[6px] w-[10px]"><path d="M1 1l4 4 4-4" fill="none" stroke="#555" strokeWidth="1.500" /></svg>
          </div>
        </div>
        <div className="flex h-[17px] shrink-0 items-center bg-[#f0f0f0] pl-[9px]">
          <svg viewBox="0 0 6 10" className="h-[10px] w-[6px]"><path d="M5 1L1 5l4 4" fill="none" stroke="#555" strokeWidth="1.500" /></svg>
          <span className="ml-[3px] h-full w-[102px] bg-[#cdcdcd]" />
          <svg viewBox="0 0 6 10" className="ml-[10px] h-[10px] w-[6px]"><path d="M1 1l4 4-4 4" fill="none" stroke="#555" strokeWidth="1.500" /></svg>
        </div>
      </div>
      <div className="flex flex-col pt-px">
        <SideButton label="单构件输入" h="h-[22px]" />
        <SideButton label="报表预览" h="h-[22px]" />
      </div>
    </div>
  );
}

function StatusCell({ w, children }: { w: string; children: ReactNode }) {
  return <div className={`flex h-[20px] shrink-0 items-center overflow-hidden border border-[#dfdfdf] bg-[#fafafa] pl-px whitespace-nowrap ${w}`}>{children}</div>;
}

function Mono({ children }: { children: ReactNode }) {
  return <span className="font-['Liberation_Mono',monospace] text-[10px]">{children}</span>;
}

function StatusBar() {
  return (
    <div className="flex h-[22px] shrink-0 items-center gap-[2px] text-[#111]">
      <StatusCell w="w-[148px]"><Mono>X=5578 Y=14861</Mono></StatusCell>
      <StatusCell w="w-[78px]">层高<Mono>:4.5m</Mono></StatusCell>
      <StatusCell w="w-[98px]">底标高<Mono>:-0.05m</Mono></StatusCell>
      <StatusCell w="w-[48px]"><Mono>0</Mono></StatusCell>
      <StatusCell w="w-[915px]">按鼠标左键指定第一个角点，或拾取构件图元</StatusCell>
      <StatusCell w="w-[69px]"><Mono>525.6 FPS</Mono></StatusCell>
    </div>
  );
}

function Slot({ w, on, bar, children }: { w: string; on?: boolean; bar?: string; children: ReactNode }) {
  return (
    <div className={`relative flex h-full shrink-0 items-center justify-center ${w} ${on ? "bg-[#33393e]" : ""}`}>
      {children}
      {bar ? <span className={`absolute bottom-0 h-[2px] bg-[#76b9ed] ${bar}`} /> : null}
    </div>
  );
}

function Taskbar() {
  return (
    <div className="flex h-[41px] shrink-0 items-stretch bg-[#00080d] text-white">
      <div className="flex w-12 shrink-0 items-center justify-center bg-black">
        <svg viewBox="0 0 16 16" className="h-4 w-4"><path d="M0 2.300l6.600-.9v6.200H0zM7.400 1.300L16 0v7.600H7.400zM0 8.400h6.600v6.300L0 13.800zM7.400 8.400H16V16l-8.600-1.200z" fill="#fff" /></svg>
      </div>
      <div className="flex w-[344px] shrink-0 items-center bg-[#333333] pl-[12px]">
        <span className="h-[19px] w-[19px] rounded-full border-[3px] border-[#e6e6e6]" />
        <span className="ml-[5px] text-sm text-[#7f8b99]">在这里输入你要搜索的内容</span>
        <svg viewBox="0 0 12 18" className="ml-[114px] h-[18px] w-3"><rect x="3" y="1" width="6" height="10" rx="3" fill="none" stroke="#888" /><path d="M1 8c0 7 10 7 10 0M6 13v4M3 17h6" fill="none" stroke="#888" /></svg>
      </div>
      <Slot w="w-[49px]"><svg viewBox="0 0 20 16" className="h-4 w-5"><rect x="5" y="1" width="10" height="14" fill="none" stroke="#fff" strokeWidth="1.300" /><path d="M3 3H1v10h2M17 3h2v10h-2" fill="none" stroke="#fff" /></svg></Slot>
      <Slot w="w-[51px]"><svg viewBox="0 0 24 24" className="h-6 w-6"><path d="M11 11C4 11 1 8 2 4s7-3 9 0 0 5 0 7zM13 11c0-7 3-10 7-9s3 7 0 9-5 0-7 0zM13 13c7 0 10 3 9 7s-7 3-9 0 0-5 0-7zM11 13c0 7-3 10-7 9s-3-7 0-9 5 0 7 0z" fill="#e8e8e8" /></svg></Slot>
      <Slot w="w-[52px]"><FaInternetExplorer className="h-[25px] w-[25px] text-[#ececec]" /></Slot>
      <Slot w="w-[49px]"><svg viewBox="0 0 24 24" className="h-5 w-5"><path d="M18 4C10 1 3 6 3 13s8 9 12 6 3-9-2-9-6 6-2 6" fill="none" stroke="#bdbdbd" strokeWidth="2" /></svg></Slot>
      <Slot w="w-[51px]"><FaEdge className="h-6 w-6 text-[#0a78d7]" /></Slot>
      <Slot w="w-[44px]"><span className="relative flex h-7 w-7 items-center justify-center"><FaInternetExplorer className="h-6 w-6 text-[#1fa0e8]" /><span className="absolute h-[26px] w-[12px] rotate-45 rounded-full border-l-2 border-[#f4c020]" /></span></Slot>
      <Slot w="w-[41px]"><svg viewBox="0 0 24 22" className="h-[22px] w-6"><path d="M1 3h8l2 2h12v16H1z" fill="#f5d475" /><path d="M1 7h22v3H1z" fill="#fdeeb5" /><path d="M8 21v-6h8v6z" fill="#2a9fe0" /></svg></Slot>
      <Slot w="w-[51px]" bar="left-[7px] w-[34px]"><svg viewBox="0 0 24 24" className="h-[27px] w-[27px]"><path d="M20 4C12 0 3 5 3 13s8 10 13 8 6-9 0-10-7 5-3 5" fill="none" stroke="#1ca6ea" strokeWidth="3.500" /></svg></Slot>
      <Slot w="w-[37px]" bar="left-px w-[35px]"><span className="flex h-[22px] w-[22px] items-center justify-center rounded-full border border-[#e5f5d8] bg-[#5cb92f] text-sm font-bold leading-none text-white">e</span></Slot>
      <Slot w="w-[50px]" bar="left-[9px] w-[36px]"><svg viewBox="0 0 24 24" className="h-6 w-6"><rect width="24" height="24" rx="2" fill="#f4a21c" /><path d="M4 5h13v15H4z" fill="#fff3c9" /><path d="M6 9h9M6 12h9M6 15h7" stroke="#a56a10" /><path d="M14 14L22 2" stroke="#a04210" strokeWidth="2" /></svg></Slot>
      <Slot w="w-[43px]" on bar="left-0 w-full"><span className="flex h-6 w-6 items-center justify-center rounded-[4px] bg-[#1296ee]"><svg viewBox="0 0 16 16" className="h-[18px] w-[18px]"><path d="M8 2v12M2 8h12M4 5c1 4 7 4 8 0M5 12c1-2 5-2 6 0" fill="none" stroke="#fff" strokeWidth="1.300" /></svg></span></Slot>
      <Slot w="w-[50px]"><span className="text-[#e6e6e6]">链接</span></Slot>
      <div className="flex w-[64px] shrink-0 flex-col items-center justify-center text-[#e6e6e6]"><span className="leading-[19px]">22%</span><span className="leading-[19px]">CPU使用</span></div>
      <Slot w="w-[36px]"><svg viewBox="0 0 14 8" className="h-2 w-[14px]"><path d="M1 7l6-6 6 6" fill="none" stroke="#e6e6e6" strokeWidth="1.200" /></svg></Slot>
      <span className="w-[18px] shrink-0" />
      <Slot w="w-[25px]"><svg viewBox="0 0 18 12" className="h-3 w-[18px]"><rect x="3" y="2" width="11" height="8" fill="none" stroke="#eee" /><rect x="4" y="3" width="7" height="6" fill="#eee" /><path d="M15 4h2v4h-2M1 1v3M3 1v3" stroke="#eee" fill="none" /></svg></Slot>
      <Slot w="w-[24px]"><svg viewBox="0 0 16 16" className="h-4 w-4"><path d="M2 14a12 12 0 0 1 12-12M5 14a9 9 0 0 1 9-9M8 14a6 6 0 0 1 6-6M11 14a3 3 0 0 1 3-3" fill="none" stroke="#ddd" strokeDasharray="2 .7" /></svg></Slot>
      <Slot w="w-[20px]"><svg viewBox="0 0 16 16" className="h-4 w-4"><path d="M1 6h3l4-4v12l-4-4H1z" fill="none" stroke="#eee" /><path d="M11 5a5 5 0 0 1 0 6M13 3a8 8 0 0 1 0 10" fill="none" stroke="#888" /></svg></Slot>
      <Slot w="w-[37px]"><svg viewBox="0 0 24 14" className="h-[14px] w-6"><rect x="0.500" y="0.500" width="23" height="13" fill="none" stroke="#eee" /><path d="M3 4h18M3 7h18" stroke="#eee" strokeDasharray="1.500 1" /><path d="M6 10.500h12" stroke="#eee" /></svg></Slot>
      <Slot w="w-[19px]"><span className="text-sm text-white">中</span></Slot>
      <Slot w="w-[38px]"><span className="flex h-[15px] w-[15px] rotate-[-10deg] items-center justify-center rounded-[3px] bg-[#f4481c] text-[12px] font-bold leading-none text-white">S</span></Slot>
      <div className="flex w-[72px] shrink-0 flex-col items-center justify-center text-[#e6e6e6]"><span className="leading-[20px]">15:47</span><span className="leading-[19px]">2018/6/22</span></div>
      <div className="relative flex w-[42px] shrink-0 items-center justify-center">
        <svg viewBox="0 0 16 16" className="h-4 w-4"><path d="M1 1h14v10H7l-3 3v-3H1z" fill="#fff" /><path d="M4 4h8M4 6.500h8" stroke="#222" /></svg>
        <span className="absolute left-[20px] top-[21px] flex h-[15px] w-[15px] items-center justify-center rounded-full border border-[#999] bg-[#444] text-[10px] font-bold text-white">1</span>
      </div>
    </div>
  );
}

function Sogou() {
  return (
    <div className="absolute left-[885px] top-0 flex h-[27px] items-center">
      <span className="z-10 flex h-[26px] w-[25px] rotate-[-8deg] items-center justify-center rounded-[3px] bg-[#f2501e] text-[22px] font-bold leading-none text-white">S</span>
      <div className="-ml-[4px] mt-[2px] flex h-[24px] w-[186px] items-center border border-[#b4cadc] bg-white pl-[10px] text-[#2a7fd0]">
        <span className="w-[20px] text-[14px] font-bold">中</span>
        <span className="ml-[1px] w-[21px] text-[13px] font-bold">°,</span>
        <svg viewBox="0 0 16 16" className="h-4 w-4"><circle cx="8" cy="8" r="7" fill="none" stroke="#2a7fd0" strokeWidth="1.500" /><path d="M5.500 6v1M10.500 6v1M5 10c2 2 4 2 6 0" fill="none" stroke="#2a7fd0" strokeWidth="1.200" /></svg>
        <svg viewBox="0 0 16 16" className="ml-[6px] h-4 w-4"><rect x="5" y="1" width="6" height="9" rx="3" fill="#2a7fd0" /><path d="M3 8c0 5 10 5 10 0M8 12v3M5 15h6" fill="none" stroke="#2a7fd0" strokeWidth="1.300" /></svg>
        <svg viewBox="0 0 16 16" className="ml-[6px] h-4 w-4"><rect y="3" width="16" height="10" rx="1" fill="#2a7fd0" /><path d="M2 6h12M2 8.500h12" stroke="#fff" strokeDasharray="1.200 1" /></svg>
        <svg viewBox="0 0 16 16" className="ml-[8px] h-4 w-4"><circle cx="7" cy="4" r="3" fill="#b5c1cc" /><path d="M2 13c0-6 10-6 10 0z" fill="#b5c1cc" /></svg>
        <svg viewBox="0 0 16 16" className="ml-[4px] h-4 w-4"><path d="M5 1h6l4 3-2 3-2-1v9H5V6L3 7 1 4z" fill="#2a7fd0" /></svg>
        <svg viewBox="0 0 16 16" className="ml-[6px] h-4 w-4"><path d="M15 3l-3 3-2-1-1-2 3-3C9 0 6 2 7 6l-6 6c-1 2 1 4 3 3l6-6c4 1 6-2 5-6z" fill="#2a7fd0" /></svg>
      </div>
      <span className="absolute left-[124px] top-0 h-[3px] w-[45px] rounded-b-[2px] bg-[#4cd964]" />
    </div>
  );
}

export default function App() {
  return (
    <div className="relative flex h-[768px] w-[1366px] flex-col overflow-hidden bg-[#f0f0f0] font-['Open_Sans','Noto_Sans_CJK_SC',sans-serif] text-xs leading-none">
      <TitleBar />
      <MenuBar />
      <MainBar />
      <div className="flex h-[621px] shrink-0">
        <Sidebar />
        <div className="ml-[5px] flex min-w-0 flex-1 flex-col">
          <EditBar />
          <PropBar />
          <DrawBar />
          <Canvas />
          <SnapBar />
        </div>
      </div>
      <StatusBar />
      <Taskbar />
      <Sogou />
    </div>
  );
}
